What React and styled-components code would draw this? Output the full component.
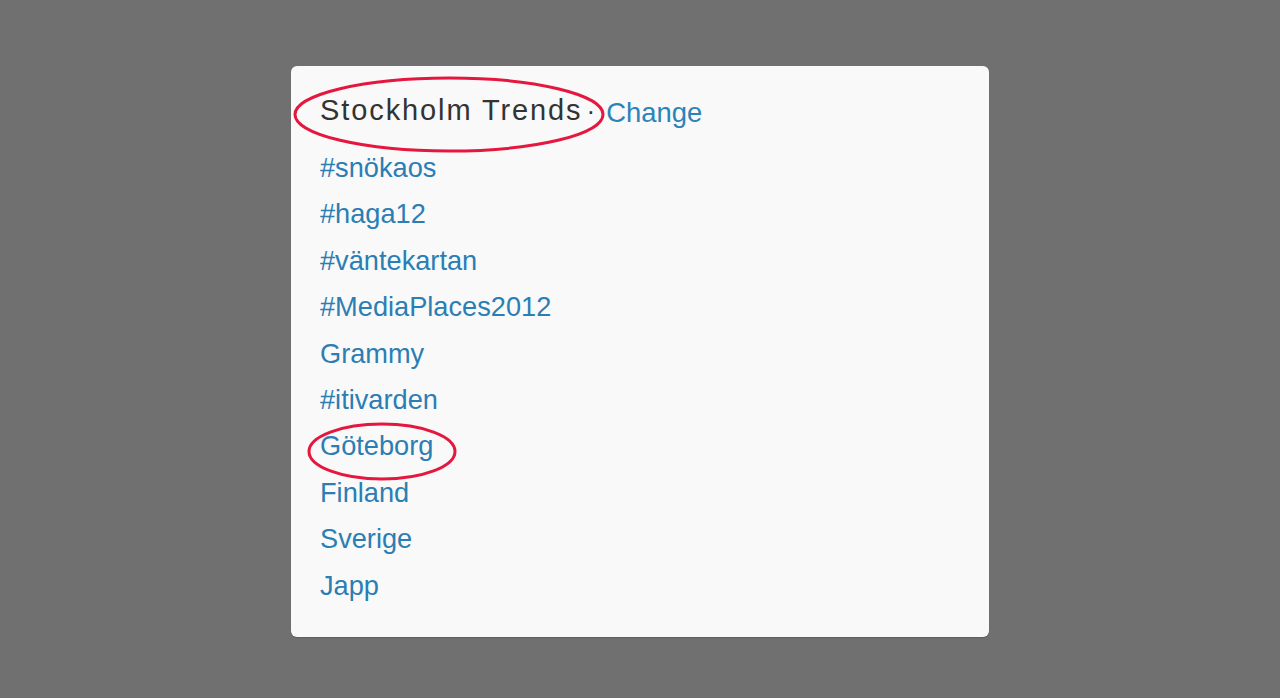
import styled, { createGlobalStyle } from "styled-components";

const GlobalStyle = createGlobalStyle`
  html, body {
    margin: 0;
    padding: 0;
    background: #707070;
  }
  body {
    font-family: "Liberation Sans", Arial, sans-serif;
  }
`

const trends = [
    "#snökaos",
    "#haga12",
    "#väntekartan",
    "#MediaPlaces2012",
    "Grammy",
    "#itivarden",
    "Göteborg",
    "Finland",
    "Sverige",
    "Japp",
]

export default function App() {
    return (
        <>
            <GlobalStyle />
            <Page>
                <Card>
                    <Header>
                        <Title>Stockholm Trends</Title>
                        <Dot>·</Dot>
                        <ChangeLink href="#">Change</ChangeLink>
                        <Circle $left={-27} $top={-16} $width={312} $height={77} />
                    </Header>
                    <TrendList>
                        {trends.map((t) => (
                            <TrendItem key={t}>
                                <TrendLink href="#">{t}</TrendLink>
                                {t === "Göteborg" && (
                                    <Circle $left={-13} $top={-1} $width={150} $height={59} />
                                )}
                            </TrendItem>
                        ))}
                    </TrendList>
                </Card>
            </Page>
        </>
    )
}

// red hand-drawn marks that sit over the text
function Circle({ $left, $top, $width, $height }) {
    return (
        <Mark style={{ left: $left, top: $top }} width={$width} height={$height}>
            <ellipse
                cx={$width / 2}
                cy={$height / 2}
                rx={$width / 2 - 2}
                ry={$height / 2 - 2}
                fill="none"
                stroke="#e5173f"
                strokeWidth="3"
            />
        </Mark>
    )
}

const Page = styled.div`
    box-sizing: border-box;
    width: 100%;
    height: 698px;
    padding-top: 66px;
    display: flex;
    justify-content: center;
    align-items: flex-start;
`
const Card = styled.div`
    box-sizing: border-box;
    width: 698px;
    height: 571px;
    background: #f9f9f9;
    border-radius: 6px;
    box-shadow: 0 1px 1px rgba(0, 0, 0, 0.15);
    padding: 26px 29px 28px;
    display: flex;
    flex-direction: column;
    gap: 17px;
`
const Header = styled.div`
    position: relative;
    display: flex;
    align-items: baseline;
    height: 36px;
    line-height: 36px;
`
const Title = styled.h3`
    margin: 0;
    font-size: 29px;
    font-weight: 400;
    letter-spacing: 1.9px;
    color: #333;
`
const Dot = styled.span`
    font-size: 26px;
    color: #333;
    margin: 0 11px 0 4px;
`
const ChangeLink = styled.a`
    font-size: 27.4px;
    color: #2a84b8;
    text-decoration: none;
    position: relative;
    top: 2px;
`
const TrendList = styled.ul`
    list-style: none;
    margin: 0;
    padding: 0;
    display: flex;
    flex-direction: column;
`
const TrendItem = styled.li`
    position: relative;
    height: 46.4px;
    line-height: 46.4px;
    font-size: 27.2px;
`
const TrendLink = styled.a`
    color: #2b7eb4;
    text-decoration: none;
`
const Mark = styled.svg`
    position: absolute;
    pointer-events: none;
    overflow: visible;
`
